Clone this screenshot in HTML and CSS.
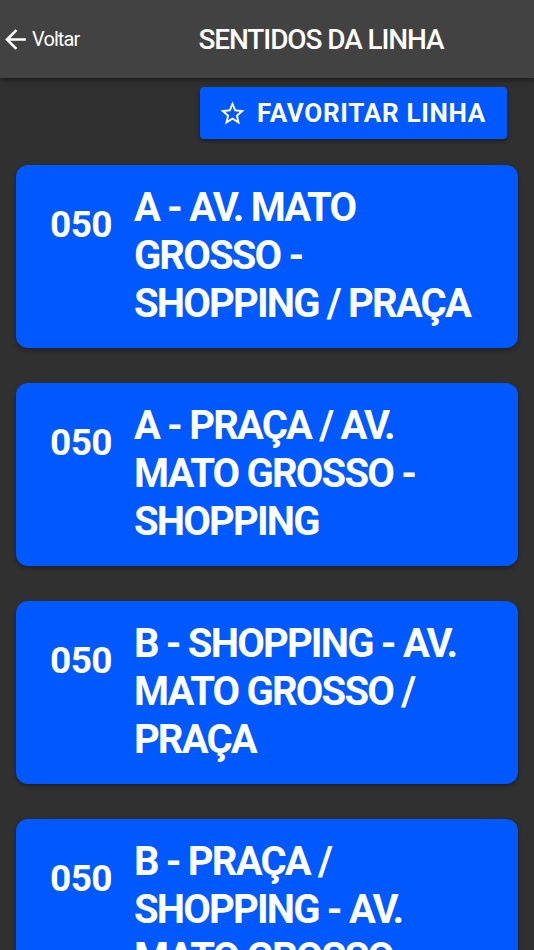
FILE: index.html
```html
<!DOCTYPE html>
<html lang="pt">
<head>
<meta charset="utf-8">
<title>Sentidos da linha</title>
<link rel="stylesheet" href="styles.css">
</head>
<body>
<header class="toolbar">
  <a class="back" href="#">
    <svg class="back-icon" viewBox="0 0 24 24" width="31" height="31"><path fill="#fff" d="M20 11H7.83l5.59-5.59L12 4l-8 8 8 8 1.41-1.41L7.83 13H20v-2z"/></svg>
    <span>Voltar</span>
  </a>
  <h1 class="title">SENTIDOS DA LINHA</h1>
</header>
<main class="content">
  <div class="actions">
    <button class="fav-btn" type="button">
      <svg class="star" viewBox="0 0 24 24" width="29" height="29"><path fill="#fff" d="M22 9.24l-7.19-.62L12 2 9.19 8.63 2 9.24l5.46 4.73L5.820 21 12 17.27 18.18 21l-1.63-7.03L22 9.24zM12 15.4l-3.76 2.27 1-4.28-3.32-2.88 4.38-.38L12 6.1l1.71 4.04 4.38.38-3.32 2.88 1 4.28L12 15.4z"/></svg>
      <span>FAVORITAR LINHA</span>
    </button>
  </div>
  <ul class="list">
    <li class="card"><span class="num">050</span><span class="name">A - AV. MATO GROSSO - SHOPPING / PRAÇA</span></li>
    <li class="card"><span class="num">050</span><span class="name">A - PRAÇA / AV. MATO GROSSO - SHOPPING</span></li>
    <li class="card"><span class="num">050</span><span class="name">B - SHOPPING - AV. MATO GROSSO / PRAÇA</span></li>
    <li class="card"><span class="num">050</span><span class="name">B - PRAÇA / SHOPPING - AV. MATO GROSSO</span></li>
  </ul>
</main>
</body>
</html>
```
FILE: styles.css
```css
* { box-sizing: border-box; }
html, body {
  margin: 0;
  padding: 0;
  height: 100%;
  overflow: hidden;
}
body {
  background: #303030;
  font-family: Roboto, "Noto Sans", "Liberation Sans", sans-serif;
  color: #fff;
}
.toolbar {
  height: 78px;
  background: #424242;
  display: flex;
  align-items: center;
  box-shadow: 0 2px 5px rgba(0,0,0,0.45);
  position: relative;
  z-index: 1;
}
.back {
  width: 108px;
  display: flex;
  align-items: center;
  gap: 1px;
  color: #fff;
  text-decoration: none;
  font-size: 20px;
  letter-spacing: -0.9px;
}
.back-icon { display: block; }
.title {
  flex: 1;
  margin: 0;
  text-align: center;
  font-size: 28px;
  font-weight: 500;
  letter-spacing: -1.1px;
}
.content {
  padding: 9px 16px 0;
}
.actions {
  display: flex;
  justify-content: flex-end;
  padding-right: 11px;
}
.fav-btn {
  display: flex;
  align-items: center;
  gap: 10px;
  height: 52px;
  padding: 0 21px 0 18px;
  background: #0059ff;
  color: #fff;
  border: 0;
  border-radius: 4px;
  font-family: inherit;
  font-size: 26px;
  font-weight: 700;
  letter-spacing: 0.7px;
  box-shadow: 0 2px 4px rgba(0,0,0,0.4);
}
.star { display: block; }
.list {
  list-style: none;
  margin: 26px 0 0;
  padding: 0;
  display: flex;
  flex-direction: column;
  gap: 35px;
}
.card {
  background: #0059ff;
  border-radius: 12px;
  min-height: 183px;
  padding: 19px 38px 19px 34px;
  display: flex;
  align-items: flex-start;
  gap: 22px;
  box-shadow: 0 2px 4px rgba(0,0,0,0.35);
  font-weight: 700;
}
.num {
  font-size: 37px;
  line-height: 48px;
  margin-top: 17px;
  letter-spacing: -0.6px;
}
.name {
  font-size: 40px;
  line-height: 48px;
  letter-spacing: -1.8px;
}
```
